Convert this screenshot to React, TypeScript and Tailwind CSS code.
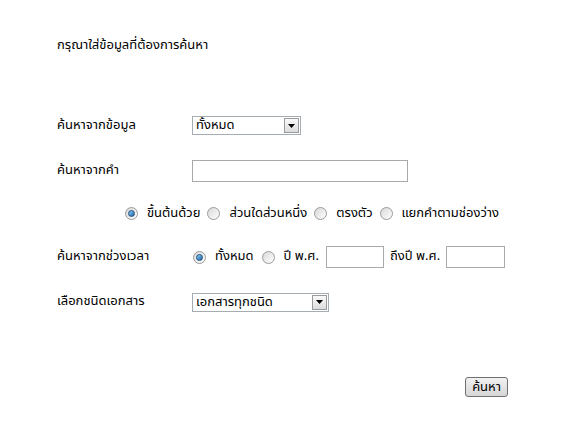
import React, { useState } from "react";

const Radio = ({ checked, onClick }: { checked: boolean; onClick?: () => void }) => (
  <span
    onClick={onClick}
    className="relative inline-flex h-[13px] w-[13px] shrink-0 items-center justify-center rounded-full border border-[#9a9a9a] bg-gradient-to-br from-[#d8d8d8] to-[#ffffff]"
  >
    {checked && (
      <span className="h-[7px] w-[7px] rounded-full border border-[#1c5180] bg-gradient-to-br from-[#8fd0f7] to-[#1d63a6]" />
    )}
  </span>
);

const Select = ({ value, width }: { value: string; width: string }) => (
  <div className={`flex h-[19px] items-center border border-[#a5acb2] bg-white ${width}`}>
    <span className="flex-1 pl-[3px] leading-none">{value}</span>
    <span className="mr-[1px] flex h-[15px] w-[15px] items-center justify-center border border-[#9a9a9a] bg-gradient-to-b from-[#fafafa] to-[#dcdcdc]">
      <svg width="7" height="4" viewBox="0 0 7 4">
        <path d="M0 0h7L3.5 4z" fill="#000" />
      </svg>
    </span>
  </div>
);

const App = () => {
  const [match, setMatch] = useState(0);
  const [period, setPeriod] = useState(0);
  const matchOptions = ["ขึ้นต้นด้วย", "ส่วนใดส่วนหนึ่ง", "ตรงตัว", "แยกคำตามช่องว่าง"];

  return (
    <div className="min-h-[429px] w-[574px] bg-white pl-[57px] text-[13px] text-black [font-family:Tahoma,'Noto_Sans_Thai','DejaVu_Sans',sans-serif]">
      <div className="flex h-[103px] items-start pt-[36px]">กรุณาใส่ข้อมูลที่ต้องการค้นหา</div>

      <div className="flex h-[45px] items-center">
        <span className="w-[135px]">ค้นหาจากข้อมูล</span>
        <Select value="ทั้งหมด" width="w-[109px]" />
      </div>

      <div className="flex h-[45px] items-center">
        <span className="w-[135px]">ค้นหาจากคำ</span>
        <input className="h-[22px] w-[216px] border border-[#a9a9a9] bg-white outline-none" />
      </div>

      <div className="flex h-[41px] items-center pl-[68px]">
        {matchOptions.map((m, i) => (
          <label key={m} className="mr-[7px] flex items-center gap-[9px]" onClick={() => setMatch(i)}>
            <Radio checked={match === i} />
            <span>{m}</span>
          </label>
        ))}
      </div>

      <div className="flex h-[46px] items-center">
        <span className="w-[136px]">ค้นหาจากช่วงเวลา</span>
        <label className="mr-[8px] flex items-center gap-[9px]" onClick={() => setPeriod(0)}>
          <Radio checked={period === 0} />
          <span>ทั้งหมด</span>
        </label>
        <label className="mr-[7px] flex items-center gap-[9px]" onClick={() => setPeriod(1)}>
          <Radio checked={period === 1} />
          <span>ปี พ.ศ.</span>
        </label>
        <input className="mr-[6px] h-[22px] w-[58px] border border-[#a9a9a9] bg-white outline-none" />
        <span className="mr-[6px]">ถึงปี พ.ศ.</span>
        <input className="h-[22px] w-[59px] border border-[#a9a9a9] bg-white outline-none" />
      </div>

      <div className="flex h-[44px] items-center">
        <span className="w-[135px]">เลือกชนิดเอกสาร</span>
        <Select value="เอกสารทุกชนิด" width="w-[137px]" />
      </div>

      <div className="flex justify-end pr-[66px] pt-[53px]">
        <button className="h-[20px] rounded-[3px] border border-[#707070] bg-gradient-to-b from-[#f2f2f2] to-[#d6d6d6] px-[6px] leading-none">
          ค้นหา
        </button>
      </div>
    </div>
  );
};

export default App;
